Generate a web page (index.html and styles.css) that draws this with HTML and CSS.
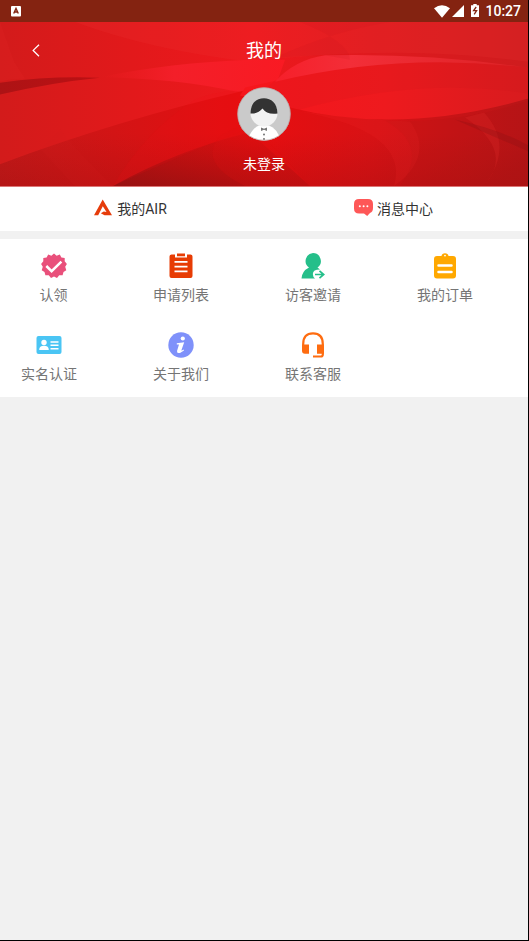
FILE: index.html
```html
<!DOCTYPE html>
<html lang="zh-CN">
<head>
<meta charset="utf-8">
<title>我的</title>
<link rel="stylesheet" href="styles.css">
</head>
<body>
<div class="screen">
  <div class="status">
    <svg class="status-app" width="10" height="11" viewBox="0 0 10 11"><rect width="10" height="10.5" rx="1" fill="#fff"/><path d="M2.7 7.5 5 2.5 7.3 7.5M3.6 6h2.8" fill="none" stroke="#842311" stroke-width="1.4"/></svg>
    <div class="status-right">
      <svg width="16" height="13" viewBox="0 0 16 13"><path d="M0 3.2Q8-2.6 16 3.2L8 12.8Z" fill="#fff"/></svg>
      <svg class="signal" width="12" height="12" viewBox="0 0 12 12"><path d="M12 0V12H0Z" fill="#fff"/></svg>
      <svg class="battery" width="8" height="13" viewBox="0 0 8 13"><path d="M2.3 0h3.4v1.2H8V13H0V1.2h2.3Z" fill="#fff"/><path d="M5.2 3 2.6 6.6h3L3.2 10.4" fill="none" stroke="#842311" stroke-width="1.3"/></svg>
      <span class="clock">10:27</span>
    </div>
  </div>

  <header class="hero">
    <svg class="hero-bg" viewBox="0 0 528 165" preserveAspectRatio="none">
      <defs>
        <linearGradient id="base" x1="0" y1="0" x2="1" y2="0"><stop offset="0" stop-color="#d31b1b"/><stop offset=".25" stop-color="#e2191b"/><stop offset=".48" stop-color="#ee181d"/><stop offset=".7" stop-color="#e01a1e"/><stop offset="1" stop-color="#cf1c1e"/></linearGradient>
        <linearGradient id="low" x1="0" y1="0" x2="1" y2="0"><stop offset="0" stop-color="#c21919"/><stop offset=".48" stop-color="#e80e10"/><stop offset=".7" stop-color="#d81215"/><stop offset="1" stop-color="#b81517"/></linearGradient>
        <linearGradient id="shade" x1="0" y1="0" x2="0" y2="1"><stop offset=".45" stop-color="#8d0c0c" stop-opacity="0"/><stop offset="1" stop-color="#8d0c0c" stop-opacity=".25"/></linearGradient>
        <linearGradient id="dark" x1="0" y1="1" x2=".7" y2="0"><stop offset="0" stop-color="#901111" stop-opacity=".85"/><stop offset="1" stop-color="#b40e0f" stop-opacity=".15"/></linearGradient>
        <linearGradient id="band" x1="0" y1="0" x2="1" y2="0"><stop offset="0" stop-color="#ee1d22" stop-opacity="0"/><stop offset=".4" stop-color="#f31f29"/><stop offset="1" stop-color="#f91a23"/></linearGradient>
        <linearGradient id="lens" x1="0" y1="0" x2="1" y2="0"><stop offset="0" stop-color="#f6161c"/><stop offset=".5" stop-color="#ee1a1e"/><stop offset="1" stop-color="#d81b1e"/></linearGradient>
        <linearGradient id="crest" x1="0" y1="0" x2="1" y2="0"><stop offset="0" stop-color="#f61f2a"/><stop offset=".3" stop-color="#f32e38"/><stop offset="1" stop-color="#dc2225"/></linearGradient>
        <linearGradient id="blade" x1="0" y1="0" x2="1" y2="0"><stop offset="0" stop-color="#ad1315"/><stop offset="1" stop-color="#bd1013"/></linearGradient>
      </defs>
      <rect width="528" height="165" fill="url(#base)"/>
      <path d="M75 0H528V40Q400 22 250 40Q150 28 75 0Z" fill="#f03a3a" opacity=".18"/>
      <path d="M0 143Q120 98 245 69Q320 100 528 77V165H0Z" fill="url(#low)"/>
      <path d="M0 143Q120 98 245 69Q320 100 528 77V165H0Z" fill="url(#shade)"/>
      <path d="M100 55.500Q170 41 250 38L285 38 275 66 236 70Q180 57 100 55.500Z" fill="url(#band)"/>
      <path d="M245 66 275 59Q400 30 528 46V77Q400 114 290 86L240 74Z" fill="url(#lens)"/>
      <path d="M275 59Q400 30 528 46V72Q420 55 300 88L290 86Q250 76 275 59Z" fill="#c9171b" opacity=".14"/>
      <path d="M275 60Q295 38 325 33.500Q430 31 528 46Q400 30 275 60Z" fill="url(#crest)"/>
      <path d="M0 61Q50 54 100 56Q50 61 0 73Z" fill="url(#blade)"/>
      <path d="M113 165Q180 128 250 111L310 165Z" fill="url(#dark)"/>
      <path d="M113 165Q145 110 195 78Q215 70 236 69L264 100Q190 130 113 165Z" fill="#f01012" opacity=".14"/>
      <path d="M245 165Q195 140 222 113L250 100 310 165Z" fill="#e01414" opacity=".22"/>
      <path d="M60 108Q85 140 113 165L75 165 40 127Z" fill="#d32020" opacity=".12"/>
      <path d="M385 99Q430 125 400 165H528V79Q460 103 385 99Z" fill="#9d1114" opacity=".1"/>
      <path d="M300 90Q410 110 394 165Q435 135 410 100Q360 98 300 90Z" fill="#ff3030" opacity=".12"/>
      <path d="M465 96Q515 130 484 165Q515 125 484 91Z" fill="#ef3030" opacity=".2"/>
      <path d="M455 98Q500 108 528 124V130Q500 118 455 98Z" fill="#8b1114" opacity=".3"/>
      <path d="M300 0Q350 20 350 38L325 33.500Q300 34 275 36Q330 10 390 0Z" fill="#c9181b" opacity=".14"/>
      <path d="M0 0 14 40 25 57Q10 57 0 60Z" fill="#ed3333" opacity=".12"/>
    </svg>
    <div class="nav">
      <svg class="back" width="8" height="13" viewBox="0 0 8 13"><path d="M7 .7 1.2 6.4 7 12.2" fill="none" stroke="#fff" stroke-width="1.3"/></svg>
      <h1>我的</h1>
    </div>
    <svg class="avatar" width="54" height="54" viewBox="0 0 54 54">
      <defs><clipPath id="face"><circle cx="27" cy="27" r="26.5"/></clipPath></defs>
      <g clip-path="url(#face)"><rect width="54" height="54" fill="#cacaca"/><path d="M10 54Q15 41 22 38.5H32Q40 41 44 54Z" fill="#fff"/><circle cx="27" cy="26" r="13.5" fill="#f2f2f2"/><path d="M13.5 26.500C14 15 20 11.200 27 11.200S40.400 16 40.500 26.500Q30 28 25.500 21.500 21 27 13.500 26.500Z" fill="#333"/><path d="M24 40.500v3.500l3-1.200 3 1.200v-3.500l-3 1.200Z" fill="#777"/><circle cx="27" cy="47.500" r=".9" fill="#666"/><circle cx="27" cy="52" r=".9" fill="#666"/></g>
      <circle cx="27" cy="27" r="26.300" fill="none" stroke="#b99f9f" stroke-width=".7"/>
    </svg>
    <div class="user">未登录</div>
  </header>

  <nav class="tabs">
    <a class="tab"><svg width="18" height="17" viewBox="0 0 18 17"><path d="M0 16.300 8.700.5 18 16.300H10.500L6.800 14.300 9.800 12.600 12.500 13 8.800 7.200 4.200 16.300Z" fill="#e63c0b"/></svg><span>我的AIR</span></a>
    <a class="tab"><svg width="19" height="17" viewBox="0 0 19 17"><path d="M5 0h9q5 0 5 5v4q0 4-3 5l-2.800 3-3.200-2.500H5Q0 14.500 0 9.500V5Q0 0 5 0Z" fill="#fe5757"/><g fill="#fff"><circle cx="5.800" cy="7.200" r="1"/><circle cx="9.600" cy="7.200" r="1"/><circle cx="13.400" cy="7.200" r="1"/></g></svg><span>消息中心</span></a>
  </nav>

  <main class="grid">
    <a class="item item-wide"><svg viewBox="0 0 26 26"><path d="M13 .5 15.600 2.700 18.800 1.400 20.400 4.500 23.700 4.900 23.700 8.300 25.900 11 24.200 13.800 25.300 17.200 22.500 19 21.600 22.300 18.200 22.300 16 25 13 23.400 10 25 7.800 22.300 4.400 22.300 3.500 19 .7 17.200 1.800 13.800.1 11 2.300 8.300 2.300 4.900 5.600 4.500 7.200 1.400 10.400 2.700Z" fill="#e9507b"/><path d="M5.300 13 10.600 18.200 20.400 8.700" fill="none" stroke="#fff" stroke-width="2.500"/></svg><span>认领</span></a>
    <a class="item"><svg viewBox="0 0 26 26"><path d="M3.500 1.500H7v3h12v-3h3.500q2 0 2 2V23q0 2-2 2h-19q-2 0-2-2V3.500q0-2 2-2ZM9 .5h8v2.700H9Z" fill="#e73c04"/><path d="M6.500 8.800h13M6.500 13.600h13M6.500 18.400h13" stroke="#fff" stroke-width="1.700"/></svg><span>申请列表</span></a>
    <a class="item"><svg viewBox="0 0 26 26"><path d="M13 0a8 8 0 0 1 4.500 14.500L20 16.500q-8 0-7 5.500 0 2 2 3.500H1.500Q2 18 9 14.500A8 8 0 0 1 13 0Z" fill="#25bf8a"/><path d="M15 21.500h8.500M19.500 17.800l4.200 3.700-4.200 3.700" fill="none" stroke="#25bf8a" stroke-width="1.700"/></svg><span>访客邀请</span></a>
    <a class="item"><svg viewBox="0 0 26 26"><path d="M5 3h4.500Q10 .2 13 .2T16.500 3H21q3 0 3 3v16.500q0 3-3 3H5q-3 0-3-3V6Q2 3 5 3Z" fill="#ffa800"/><circle cx="13" cy="2.600" r=".9" fill="#fff"/><path d="M6.500 12.500h13M6.500 19h13" stroke="#fff" stroke-width="2.500" stroke-linecap="round"/></svg><span>我的订单</span></a>
    <a class="item"><svg viewBox="0 0 26 26"><rect x=".5" y="4" width="25" height="18" rx="2" fill="#4ac5f4"/><circle cx="8" cy="10.500" r="2.700" fill="#fff"/><path d="M3.200 18q0-4.200 4.800-4.200t4.800 4.200ZM14.500 9.300h8v1.500h-8Zm0 3.300h8v1.500h-8Zm0 3.300h8v1.500h-8Z" fill="#fff"/></svg><span>实名认证</span></a>
    <a class="item"><svg viewBox="0 0 26 26"><circle cx="13" cy="13" r="12.700" fill="#7f91fa"/><circle cx="14.800" cy="6.500" r="2.100" fill="#fff"/><path d="M8.800 11.200 16.200 10.200 13.400 18.200Q13.200 19.300 15.600 17.500L16 18.400Q9 23.500 9 18.900L11 12.600 8.800 12.400Z" fill="#fff"/></svg><span>关于我们</span></a>
    <a class="item"><svg viewBox="0 0 26 26"><path d="M3.200 15V12q0-10.700 9.800-10.700t9.800 10.700v10.500q0 2-2 2H13" fill="none" stroke="#fe6c10" stroke-width="2.200"/><path d="M2 12.500h7v9.300H5q-3 0-3-3ZM17 12.500h7v9.300h-7Z" fill="#fe6c10"/></svg><span>联系客服</span></a>
  </main>
</div>
</body>
</html>
```
FILE: styles.css
```css
* { box-sizing: border-box; }

body {
  margin: 0;
  background: #000;
  font-family: Roboto, "Noto Sans CJK SC", sans-serif;
}

svg { display: block; }

.screen {
  width: 528px;
  height: 940px;
  background: #f1f1f1;
  overflow: hidden;
}

.status {
  display: flex;
  justify-content: space-between;
  align-items: center;
  height: 22px;
  padding: 0 7px 0 11px;
  background: #842311;
}

.status-right { display: flex; align-items: center; }
.signal { margin-left: 2px; }
.battery { margin: -2px 6px 0 7px; }

.clock {
  color: #fff;
  font-size: 14px;
  line-height: 22px;
  font-weight: 500;
}

.hero {
  position: relative;
  height: 165px;
  border-bottom: 1px solid #dc7777;
  color: #fff;
  display: flex;
  flex-direction: column;
  align-items: center;
}

.hero-bg {
  position: absolute;
  inset: 0;
  width: 100%;
  height: 100%;
}

.nav {
  position: relative;
  width: 100%;
  height: 58px;
  display: grid;
  grid-template-columns: 1fr auto 1fr;
  align-items: center;
}

.back { margin: -1px 0 0 32px; }

.nav h1 {
  margin: 0;
  font-size: 18px;
  line-height: 26px;
  font-weight: 400;
}

.avatar { position: relative; margin-top: 7px; }

.user {
  position: relative;
  margin-top: 12px;
  font-size: 14px;
  line-height: 22px;
}

.tabs {
  display: grid;
  grid-template-columns: 1fr 1fr;
  height: 44px;
  margin-bottom: 8px;
  background: #fff;
}

.tab {
  display: flex;
  justify-content: center;
  align-items: center;
  gap: 5px;
  padding: 0 3px 1px 0;
  color: #333;
  font-size: 14px;
  line-height: 20px;
}

.tab svg { margin-top: -2px; }
.tab:last-child { gap: 4px; padding-right: 5px; }

.grid {
  display: grid;
  grid-template-columns: repeat(4, 132px);
  grid-template-rows: 79px 79px;
  justify-items: start;
  height: 158px;
  padding-left: 21px;
  background: #fff;
}

.item {
  display: flex;
  flex-direction: column;
  align-items: center;
  min-width: 56px;
  padding-top: 14px;
  color: #757575;
  font-size: 14px;
  line-height: 20px;
}

.item-wide { min-width: 65px; }
.item svg { width: 26px; height: 26px; margin-bottom: 6px; }
```
